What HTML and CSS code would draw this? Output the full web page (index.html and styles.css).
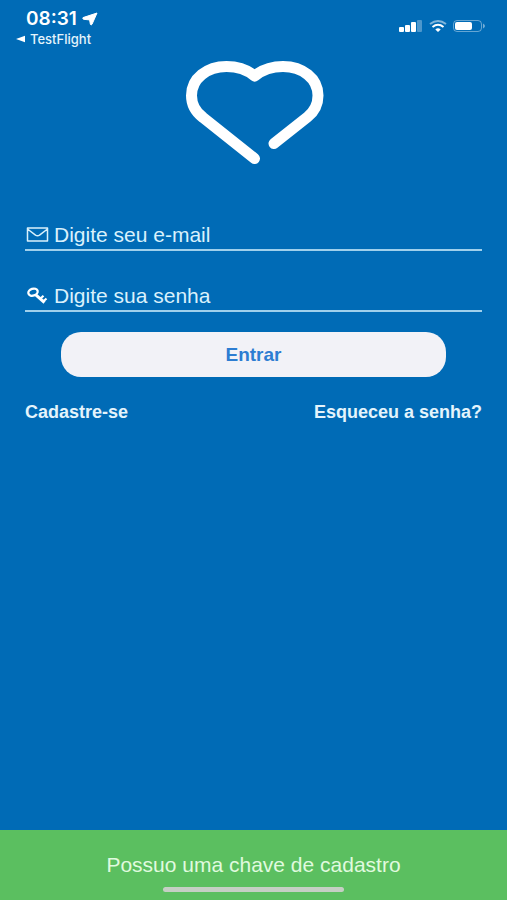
FILE: index.html
```html
<!DOCTYPE html>
<html lang="pt-BR">
<head>
<meta charset="utf-8">
<meta name="viewport" content="width=device-width, initial-scale=1">
<title>Entrar</title>
<link rel="stylesheet" href="styles.css">
</head>
<body>
<header class="status">
  <div class="status-left">
    <div class="clock"><span>08:31</span>
      <svg width="16" height="14" viewBox="0 0 16 14" aria-hidden="true"><path d="M15 1 1 5.600Q.4 7 1.600 7.300L7.600 7.900 8.400 12.400Q9.200 13.400 10 12.300Z" fill="#fff" stroke="#fff" stroke-linejoin="round"/></svg>
    </div>
    <a class="back" href="#">
      <svg width="10" height="8" viewBox="0 0 10 8" aria-hidden="true"><path d="M0 4 9 .8V7.200Z" fill="#fff"/></svg>
      <span>TestFlight</span>
    </a>
  </div>
  <svg class="indicators" width="88" height="16" viewBox="0 0 88 16" aria-hidden="true">
    <g fill="#fff">
      <rect x="0" y="10" width="5" height="5" rx="1"/>
      <rect x="6" y="8" width="5" height="7" rx="1"/>
      <rect x="12" y="5" width="5" height="10" rx="1"/>
      <rect x="18" y="3" width="5" height="12" rx="1" opacity=".3"/>
    </g>
    <g fill="none" stroke="#fff" stroke-width="2">
      <path d="M31 7Q39 1 47 7" opacity=".5"/>
      <path d="M33.500 10Q39 5.600 44.500 10"/>
    </g>
    <path d="M36.300 12.400Q39 10 41.700 12.400L39 15Z" fill="#fff"/>
    <rect x="54.500" y="3.500" width="28" height="11" rx="3.500" fill="none" stroke="#fff" opacity=".4"/>
    <rect x="56" y="5" width="17" height="8" rx="2" fill="#fff"/>
    <path d="M84 6.500Q88 9 84 11.500Z" fill="#fff" opacity=".45"/>
  </svg>
</header>
<main class="content">
  <svg class="logo" width="140" height="106" viewBox="184 60 140 106" role="img" aria-label="Coração">
    <path d="M254.500 158.500 203 117.500C195 111.500 191.500 104.500 191.500 95.500C191.500 78.500 207 66.500 226.500 66.500C238 66.500 247 69.500 254.700 76C262.500 69.500 271.500 66.500 283 66.500C302.500 66.500 318 78.500 318 95.500C318 104 314.500 111.500 307.500 117L274 143.500" fill="none" stroke="#fff" stroke-width="11" stroke-linecap="round" stroke-linejoin="round"/>
  </svg>
  <form class="login">
    <label class="field">
      <svg width="24" height="18" viewBox="0 0 24 18" aria-hidden="true"><path d="M2.500 2H22.500V15H2.500ZM2.500 3 10.500 9.200Q12.500 10.500 14.500 9.200L22.500 3" fill="none" stroke="#d9f1fc" stroke-width="1.500" stroke-linejoin="round"/></svg>
      <input type="email" placeholder="Digite seu e-mail" aria-label="E-mail">
    </label>
    <label class="field">
      <svg width="24" height="18" viewBox="0 0 24 18" aria-hidden="true"><g fill="none" stroke="#fff"><ellipse cx="8" cy="5.200" rx="4.800" ry="3.400" transform="rotate(-18 8 5.200)" stroke-width="2.300"/><path d="M10.500 7.600 19.500 15.500" stroke-width="3"/><path d="M15.500 11.500 18.500 8.800M18.500 14.300 21.500 11.500" stroke-width="2.200"/></g></svg>
      <input type="password" placeholder="Digite sua senha" aria-label="Senha">
    </label>
    <button class="enter" type="submit">Entrar</button>
  </form>
  <nav class="links">
    <a href="#">Cadastre-se</a>
    <a href="#">Esqueceu a senha?</a>
  </nav>
</main>
<footer class="key-bar">
  <button class="key" type="button">Possuo uma chave de cadastro</button>
  <div class="home"></div>
</footer>
</body>
</html>
```
FILE: styles.css
```css
* {
  box-sizing: border-box;
}

body {
  margin: 0;
  min-height: 100vh;
  display: flex;
  flex-direction: column;
  background: #006bb6;
  color: #fff;
  font-family: "Liberation Sans", Arial, sans-serif;
}

a {
  color: inherit;
  text-decoration: none;
}

svg {
  flex: none;
}

.status {
  display: flex;
  justify-content: space-between;
  padding: 8px 20px 0 16px;
  font-family: Inter, sans-serif;
}

.clock {
  display: flex;
  align-items: center;
  gap: 5px;
  padding-left: 10px;
  font-size: 19px;
  font-weight: 600;
  line-height: 22px;
}

.back {
  display: flex;
  align-items: center;
  gap: 4px;
  font-size: 13px;
  font-weight: 500;
  line-height: 18px;
  color: #e4f4fc;
}

.indicators {
  margin-top: 9px;
}

.content {
  flex: 1;
  display: flex;
  flex-direction: column;
  padding: 12px 25px 0;
}

.logo {
  align-self: center;
}

.login {
  display: flex;
  flex-direction: column;
  padding-top: 55px;
}

.field {
  display: flex;
  align-items: center;
  gap: 5px;
  height: 30px;
  margin-bottom: 31px;
  border-bottom: 2px solid #9fd0ec;
}

.field input {
  flex: 1;
  min-width: 0;
  padding: 0;
  border: 0;
  outline: 0;
  background: none;
  color: #fff;
  font: 21px/28px "Liberation Sans", Arial, sans-serif;
}

.field input::placeholder {
  color: #d9f1fc;
  opacity: 1;
}

.field + .field {
  margin-bottom: 20px;
}

.enter {
  height: 45px;
  margin: 0 36px;
  border: 0;
  border-radius: 20px;
  background: #f2f2f7;
  color: #2d7dd2;
  font: bold 19px/24px "Liberation Sans", Arial, sans-serif;
}

.links {
  display: flex;
  justify-content: space-between;
  padding-top: 24px;
  font-size: 18px;
  font-weight: bold;
  line-height: 22px;
  color: #e4f4fc;
}

.key-bar {
  display: flex;
  flex-direction: column;
  align-items: center;
  padding: 20px 16px 8px;
  background: #5bbf60;
}

.key {
  padding: 0;
  border: 0;
  background: none;
  color: #e0fadf;
  font: 21px/30px "Liberation Sans", Arial, sans-serif;
}

.home {
  width: 38%;
  height: 5px;
  margin-top: 7px;
  border-radius: 3px;
  background: #c5cfc4;
}
```
